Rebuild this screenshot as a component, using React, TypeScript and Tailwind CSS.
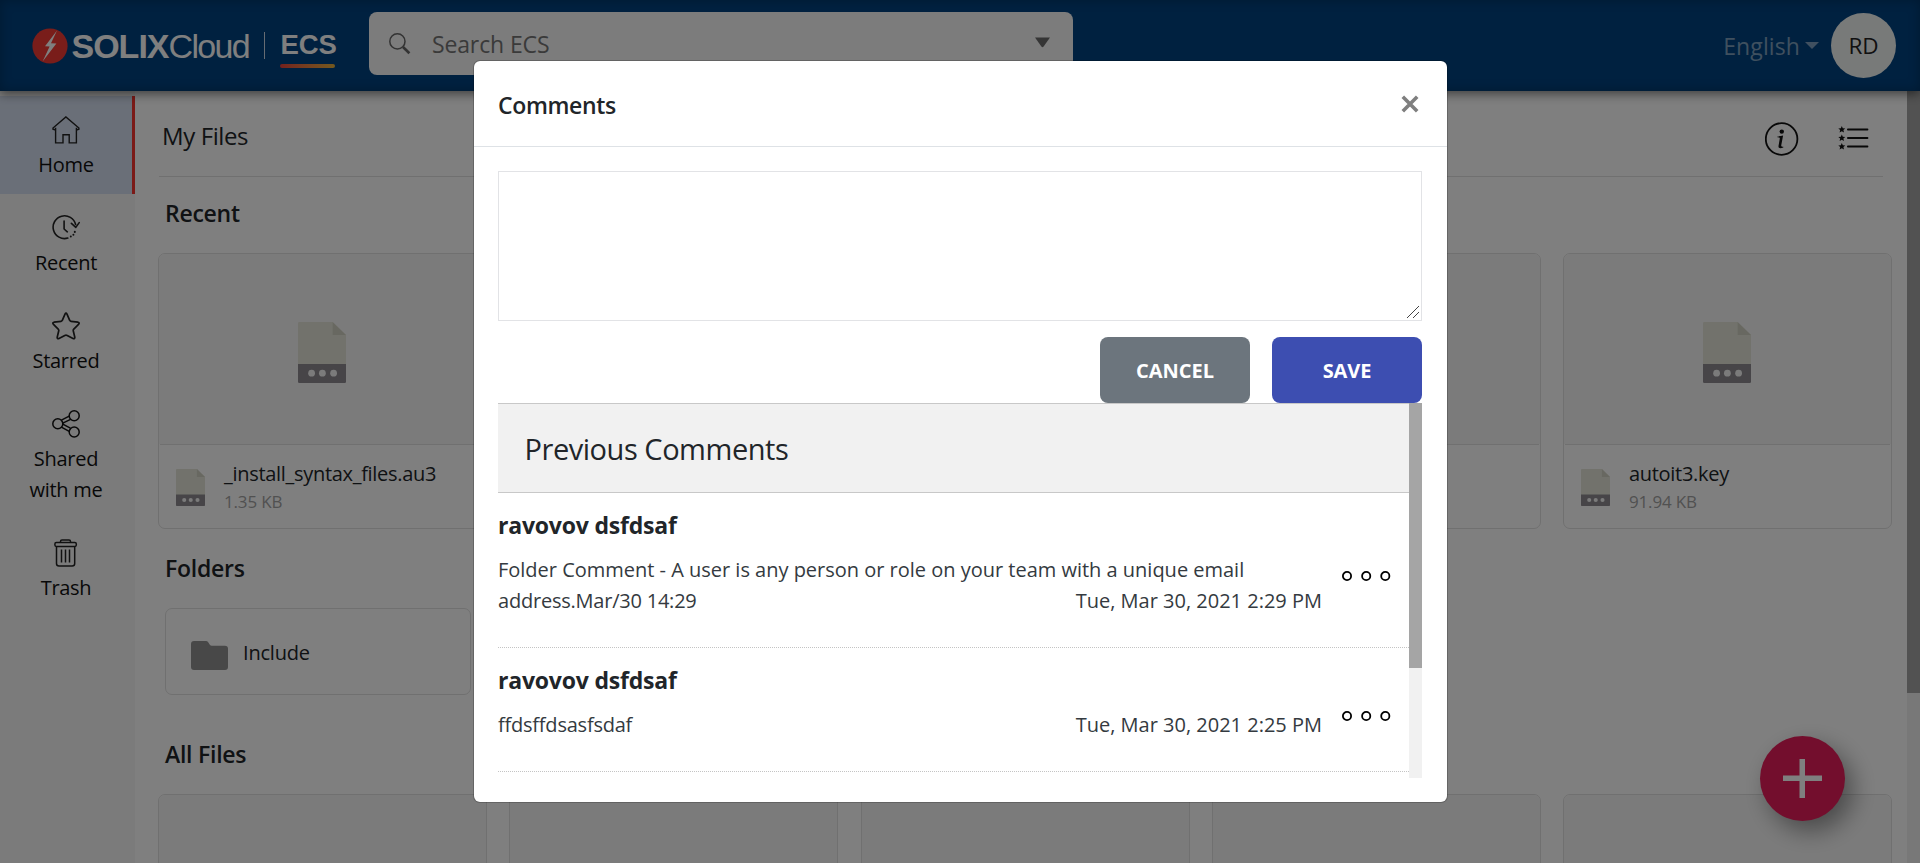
import type { ReactNode } from "react";

function BoltLogo() {
  return (
    <svg width="36" height="36" viewBox="0 0 36 36" className="shrink-0">
      <circle cx="18" cy="18" r="17.6" fill="#f23a34" />
      <path d="M25 2.5 L13 18.2 L17.6 18.6 L10.6 33.5 L24.4 15.6 L19 15.2 Z" fill="#fff" />
    </svg>
  );
}

function HomeIcon() {
  return (
    <svg width="28" height="28" viewBox="0 0 28 28" fill="none" stroke="#222" strokeWidth="1.4">
      <path d="M3.6 11.8V26.9H11V18.7H17.2V26.9H24.4V11.8M3.6 14L1 13.2V12L13.9.9L26.9 12V13.2L24.4 14" />
    </svg>
  );
}

function RecentIcon() {
  return (
    <svg width="28" height="28" viewBox="0 0 28 28" fill="none" stroke="#222" strokeWidth="1.6" strokeLinecap="round" strokeLinejoin="round">
      <path d="M15.8 24.1A11.4 11.4 0 1 1 23.6 10.5M19.4 9.4L23.8 13.4L27.2 8.6M12.1 7V15L15.3 17.8" />
      <path d="M18.8 22.5v.1M21.4 20.7v.1M22.8 17.8v.1" strokeWidth="2" />
    </svg>
  );
}

function StarIcon() {
  return (
    <svg width="28" height="28" viewBox="0 0 28 28" fill="none" stroke="#222" strokeWidth="1.7" strokeLinejoin="round">
      <path d="M13 2.2Q14 .2 15 2.2L17.7 8.3Q18 9.2 19 9.3L26 10.2Q28 10.8 26.5 12.3L21.8 17.2Q21 18 21.3 19L22.8 25.2Q22.9 27.2 21 26.5L15.2 23.4Q14 22.8 12.8 23.4L7 26.5Q5.1 27.2 5.2 25.2L6.7 19Q7 18 6.2 17.2L1.5 12.3Q0 10.8 2 10.2L9 9.3Q10 9.2 10.3 8.3Z" />
    </svg>
  );
}

function ShareIcon() {
  return (
    <svg width="28" height="28" viewBox="0 0 28 28" fill="none" stroke="#111" strokeWidth="1.5">
      <circle cx="5.8" cy="13.7" r="5" />
      <circle cx="22.2" cy="5.8" r="5" />
      <circle cx="22.2" cy="22" r="5" />
      <path d="M9.4 10.2L17.2 6.2M10.8 13.2L18.6 9.4M10.8 14.2L18.4 18.2M9.4 17.2L17.2 21.4" />
    </svg>
  );
}

function TrashIcon() {
  return (
    <svg width="28" height="28" viewBox="0 0 28 28" fill="none" stroke="#222" strokeWidth="1.5" strokeLinejoin="round">
      <rect x="2.9" y="3.6" width="21.4" height="3.8" rx="1.4" />
      <path d="M8.5 3.6V2.4Q8.5 .9 10 .9H17Q18.5 .9 18.5 2.4V3.6M4.5 7.4V24.4Q4.5 26.9 7 26.9H20.2Q22.7 26.9 22.7 24.4V7.4" />
      <path d="M9.5 10.4V23.4M13.5 10.4V23.4M17.5 10.4V23.4" />
    </svg>
  );
}

function FileIcon({ className }: { className: string }) {
  return (
    <svg viewBox="0 0 48 61" preserveAspectRatio="none" className={className}>
      <path d="M1.2 0H34.6L48 13V43H0V1.2Q0 0 1.2 0Z" fill="#e4e5d9" />
      <path d="M34.6 0L48 13H34.6Z" fill="#d1d1c2" />
      <path d="M0 42H48V59.8Q48 61 46.8 61H1.2Q0 61 0 59.8Z" fill="#8e8b90" />
      <circle cx="13.6" cy="51.2" r="3.4" fill="#f7f7f7" />
      <circle cx="24.4" cy="51.2" r="3.4" fill="#f7f7f7" />
      <circle cx="35.6" cy="51.2" r="3.4" fill="#f7f7f7" />
    </svg>
  );
}

function ListIcon() {
  const star = "M3.4 0L4.4 2.3L6.9 2.5L5 4.1L5.6 6.6L3.4 5.3L1.2 6.6L1.8 4.1L-.1 2.5L2.4 2.3Z";
  return (
    <svg width="31" height="24" viewBox="0 0 31 24" fill="#111" className="mt-[3px]">
      {[0, 8.5, 17].map((y) => (
        <g key={y} transform={`translate(.4 ${y})`}>
          <path d={star} />
          <rect x="8.6" y="2.6" width="21.4" height="1.9" rx=".9" />
        </g>
      ))}
    </svg>
  );
}

function DotsIcon() {
  return (
    <svg width="50" height="12" viewBox="0 0 50 12" fill="none" stroke="#000" strokeWidth="1.8">
      <circle cx="6" cy="6" r="4.1" />
      <circle cx="25.2" cy="6" r="4.1" />
      <circle cx="44.3" cy="6" r="4.1" />
    </svg>
  );
}

function NavItem({ icon, active, children }: { icon: ReactNode; active?: boolean; children: ReactNode }) {
  return (
    <div
      className={
        active
          ? "flex flex-col items-center border-r-3 border-[#f6352f] bg-[#d5dff0] pt-5 pb-[14px]"
          : "flex flex-col items-center border-r-3 border-transparent pt-5 pb-[14px]"
      }
    >
      {icon}
      <div className="mt-[5px] text-center text-[20px] leading-[31px] tracking-[-0.28px]">{children}</div>
    </div>
  );
}

function FileCard({ name, size }: { name?: string; size?: string }) {
  return (
    <div className="flex h-[276px] w-[329px] shrink-0 flex-col overflow-hidden rounded-[7px] border border-[#e0e0e0]">
      <div className="flex h-[190px] items-center justify-center bg-[#f7f7f7] pt-[7px] pr-px">
        <FileIcon className="h-[61px] w-[48px]" />
      </div>
      <div className="mx-px flex flex-1 items-center border-t border-[#e0e0e0] pl-[15.5px]">
        <FileIcon className="mt-[2px] h-[37px] w-[29px]" />
        {name && (
          <div className="ml-[19.5px] flex flex-col pt-px">
            <span className="text-[20px] leading-[28px] tracking-[-0.3px] text-[#212529]">{name}</span>
            <span className="text-[17px] leading-[27px] tracking-[-0.17px] text-[#a3a3a3]">{size}</span>
          </div>
        )}
      </div>
    </div>
  );
}

function Heading({ children }: { children: ReactNode }) {
  return <h2 className="mb-1 pl-[7px] text-[23px] leading-[72px] font-semibold tracking-[-0.25px] text-[#212529]">{children}</h2>;
}

function Comment({ lines, date, height }: { lines: string[]; date: string; height: string }) {
  const last = lines[lines.length - 1];
  return (
    <div className={`flex border-b border-dotted border-[#c4c4c4] ${height}`}>
      <div className="flex w-[824px] flex-col pt-[15px]">
        <div className="text-[23px] leading-[34px] font-bold tracking-[-0.2px]">ravovov dsfdsaf</div>
        <div className="mt-3 text-[20px] leading-[31px] text-[#343a40]">
          {lines.slice(0, -1).map((line) => (
            <div key={line} className="tracking-[-0.01px]">{line}</div>
          ))}
          <div className="flex justify-between">
            <span className="tracking-[-0.22px]">{last}</span>
            <span>{date}</span>
          </div>
        </div>
      </div>
      <div className="flex flex-1 items-center pt-[12px] pl-[19px]">
        <DotsIcon />
      </div>
    </div>
  );
}

export default function App() {
  return (
    <div className="relative h-[863px] w-full overflow-hidden bg-white font-['Open_Sans','Noto_Sans',sans-serif] text-[#212529]">
      <header className="relative z-10 flex h-[91px] items-center bg-[#004280] pl-8 shadow-[0_3px_10px_rgba(0,0,0,0.5),inset_0_0_12px_rgba(0,0,0,0.25)]">
        <BoltLogo />
        <div className="ml-[3.5px] flex items-center font-['Liberation_Sans',Arial,sans-serif] text-white">
          <span className="text-[34px] leading-[40px] font-bold tracking-[-1px]">SOLIX</span>
          <span className="text-[34px] leading-[40px] tracking-[-1.7px]">Cloud</span>
          <span className="ml-[15px] h-[27px] w-[1.5px] bg-white/80" />
          <span className="ml-[15px] flex flex-col pt-[7px]">
            <span className="text-[27.5px] leading-[30px] font-bold">ECS</span>
            <span className="mt-1 h-1 w-[55px] rounded-full bg-linear-to-r from-[#e8403c] to-[#e6b23e]" />
          </span>
        </div>
        <div className="mb-1 ml-[32.5px] flex h-[63px] w-[704px] items-center rounded-[8px] bg-[#f8f8f8] pr-[23px] pl-[20px]">
          <svg width="22" height="22" viewBox="0 0 22 22" fill="none" stroke="#666" strokeWidth="1.5" className="mt-px">
            <circle cx="8.4" cy="8.4" r="7.6" />
            <path d="M14 14L20.4 20.2" strokeWidth="2.6" />
          </svg>
          <span className="ml-[20.5px] flex-1 pt-[2px] text-[23px] tracking-[-0.12px] text-[#757575]">Search ECS</span>
          <svg width="15" height="11" viewBox="0 0 15 11" className="mb-[3px]">
            <path d="M0 .5H15L8.6 9.6Q7.5 11 6.4 9.6Z" fill="#6a6a6a" />
          </svg>
        </div>
        <div className="ml-auto flex items-center pr-6">
          <span className="pt-px text-[23px] tracking-[0.1px] text-white/50">English</span>
          <span className="ml-[5px] h-0 w-0 border-x-[7px] border-t-[7px] border-x-transparent border-t-white/50" />
          <span className="ml-[12px] flex h-[65px] w-[65px] items-center justify-center rounded-full bg-[#f1f4f2] text-[22.5px] text-[#222]">RD</span>
        </div>
      </header>

      <div className="flex h-[772px]">
        <nav className="flex w-[135px] shrink-0 flex-col bg-[#f7f7f7] pt-[5px] text-[#111]">
          <NavItem icon={<HomeIcon />} active>Home</NavItem>
          <NavItem icon={<RecentIcon />}>Recent</NavItem>
          <NavItem icon={<StarIcon />}>Starred</NavItem>
          <NavItem icon={<ShareIcon />}>Shared<br />with me</NavItem>
          <NavItem icon={<TrashIcon />}>Trash</NavItem>
        </nav>

        <main className="flex h-[772px] w-[1772px] shrink-0 flex-col overflow-hidden pl-[23px]">
          <div className="mr-6 ml-px flex h-[86px] shrink-0 items-center border-b border-[#e0e0e0] pt-[5px] pr-[14px] pl-[3px]">
            <span className="flex-1 pb-px text-[24px] leading-[30px] tracking-[-0.4px]">My Files</span>
            <svg width="34" height="34" viewBox="0 0 34 34" className="mt-[5px] mr-[39px]" fill="#111">
              <circle cx="16.6" cy="17" r="15.8" fill="none" stroke="#111" strokeWidth="1.8" />
              <circle cx="16.8" cy="9.6" r="2.2" />
              <path d="M12.5 14.4Q15.7 14.2 18.1 13.4L16.2 23.4Q16.1 25.2 18.3 24.8V25.6Q13.1 27.4 13.5 24L14.8 16.4Q14.9 15.4 12.4 15.3Z" />
            </svg>
            <ListIcon />
          </div>

          <Heading>Recent</Heading>
          <div className="flex shrink-0 gap-[22.25px]">
            <FileCard name="_install_syntax_files.au3" size="1.35 KB" />
            <FileCard />
            <FileCard />
            <FileCard />
            <FileCard name="autoit3.key" size="91.94 KB" />
          </div>

          <div className="mt-[3px]">
            <Heading>Folders</Heading>
          </div>
          <div className="ml-[7px] flex h-[87px] w-[306px] shrink-0 items-center rounded-[7px] border border-[#e0e0e0] pl-[25px]">
            <svg width="37" height="29" viewBox="0 0 37 29" className="mt-[7px]">
              <path d="M3 0H15Q16.4 0 17.2 1.3L19 4Q19.6 4.8 20.8 4.8H34Q37 4.8 37 7.8V26Q37 29 34 29H3Q0 29 0 26V3Q0 0 3 0Z" fill="#919191" />
            </svg>
            <span className="ml-[15px] pt-[2px] text-[20px] tracking-[-0.2px]">Include</span>
          </div>

          <div className="mt-[23px]">
            <Heading>All Files</Heading>
          </div>
          <div className="flex shrink-0 gap-[22.25px]">
            <FileCard />
            <FileCard />
            <FileCard />
            <FileCard />
            <FileCard />
          </div>
        </main>

        <div className="w-[13px] shrink-0 bg-[#f1f1f1]">
          <div className="h-[602px] bg-[#a5a5a5]" />
        </div>
      </div>

      <button className="absolute top-[736px] left-[1760px] flex h-[85px] w-[85px] items-center justify-center rounded-full bg-[#e61d5a] shadow-[8px_10px_24px_rgba(0,0,0,0.4)]">
        <svg width="39" height="39" viewBox="0 0 39 39" fill="#fff">
          <path d="M16.5 0H22V16.5H39V22H22V39H16.5V22H0V16.5H16.5Z" />
        </svg>
      </button>

      <div className="absolute inset-0 z-20 flex bg-black/50 pt-[60px] pl-[473px]">
        <div className="flex h-[743px] w-[975px] flex-col rounded-[7px] border border-black/20 bg-white bg-clip-padding">
          <div className="flex h-[86px] shrink-0 items-center justify-between border-b border-[#dee2e6] pr-[28.5px] pl-6">
            <h5 className="pt-[2px] text-[23px] leading-[30px] font-semibold tracking-[-0.35px]">Comments</h5>
            <svg width="18" height="18" viewBox="0 0 18 18" stroke="#7f7f7f" strokeWidth="3.6">
              <path d="M1.8 1.8L16.2 16.2M16.2 1.8L1.8 16.2" />
            </svg>
          </div>
          <div className="flex flex-col px-6 pt-6">
            <div className="relative h-[150px] w-[924px]">
              <textarea className="block h-[150px] w-[924px] resize-none rounded-none border border-[#e2e3e6] bg-white" />
              <svg width="12" height="12" viewBox="0 0 12 12" stroke="#444" strokeWidth="1" className="absolute right-[3px] bottom-[3px]">
                <path d="M0 12L12 0M6 12L12 6" />
              </svg>
            </div>
            <div className="mt-4 flex w-[924px] justify-end gap-[22px] text-[20px] font-bold text-white">
              <button className="h-[66px] w-[150px] rounded-[8px] bg-[#6c757d] pt-px">CANCEL</button>
              <button className="h-[66px] w-[150px] rounded-[8px] bg-[#3d4eb1] pt-px tracking-[-0.1px]">SAVE</button>
            </div>
            <div className="flex h-[375px] w-[924px]">
              <div className="flex-1">
                <div className="h-[90px] border-y border-[#c8c8c8] bg-[#f1f1f1] pl-[26.5px] text-[29px] leading-[90px] tracking-[-0.46px]">
                  Previous Comments
                </div>
                <Comment
                  height="h-[155px]"
                  lines={[
                    "Folder Comment - A user is any person or role on your team with a unique email",
                    "address.Mar/30 14:29",
                  ]}
                  date="Tue, Mar 30, 2021 2:29 PM"
                />
                <Comment height="h-[124px]" lines={["ffdsffdsasfsdaf"]} date="Tue, Mar 30, 2021 2:25 PM" />
              </div>
              <div className="w-[13px] bg-[#f1f1f1]">
                <div className="h-[265px] bg-[#a5a5a5]" />
              </div>
            </div>
          </div>
        </div>
      </div>
    </div>
  );
}
